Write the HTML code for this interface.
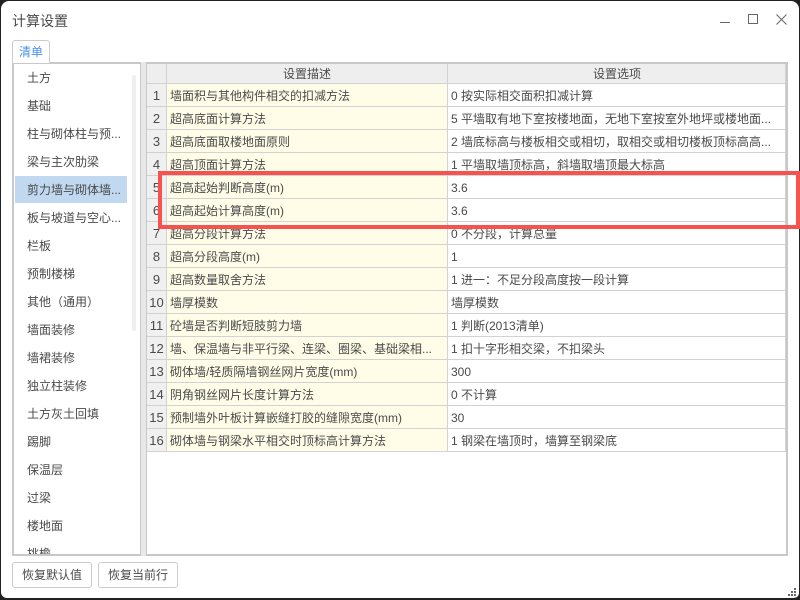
<!DOCTYPE html>
<html lang="zh"><head><meta charset="utf-8">
<style>
html,body{margin:0;padding:0;width:800px;height:600px;overflow:hidden;background:#222}
*{box-sizing:border-box}
body{font-family:"Liberation Sans","Noto Sans CJK SC",sans-serif;font-size:12px;color:#4a4a4a}
.a{position:absolute}
.t{position:absolute;white-space:nowrap;line-height:16px}
.n{position:absolute;left:147px;width:19px;text-align:center;white-space:nowrap;line-height:16px;font-size:13px}
.li{position:absolute;left:27px;white-space:nowrap;line-height:16px}
.h{position:absolute;left:147px;width:639px;background:#d2d2d2;height:1px}
.v{position:absolute;background:#d2d2d2;width:1px}
.btn{position:absolute;top:562px;height:26px;width:80px;border:1px solid #ccc;border-radius:3px;background:#fff;text-align:center;line-height:24px}
</style></head><body>
<div class="a" style="left:0;top:0;width:800px;height:600px;background:#222"></div>
<div class="a" style="left:1px;top:1px;width:798px;height:597px;background:#fff;border-radius:8px 8px 5px 6px"></div>

<div class="t" style="left:12px;top:11px;font-size:14px;line-height:20px">计算设置</div>
<svg class="a" style="left:720px;top:10px" width="70" height="20" fill="none" stroke="#666" stroke-width="1">
<rect x="28.5" y="4.5" width="9" height="9"/>
<path d="M56.5 4.5 L66.5 14.5 M66.5 4.5 L56.5 14.5"/>
</svg>
<div class="a" style="left:720px;top:22px;width:10px;height:1px;background:#666"></div>

<!-- tab -->
<div class="a" style="left:12px;top:40px;width:38px;height:23px;border:1px solid #ccc;border-bottom:none;border-radius:3px 3px 0 0;background:#fff;z-index:2"></div>
<div class="t" style="left:19px;top:44px;color:#4a90e8;z-index:3">清单</div>

<!-- left list -->
<div class="a" style="left:12px;top:62px;width:129px;height:494px;border:2px solid #c8c8c8;border-right-width:1px;background:#fff;overflow:hidden"></div>
<div class="a" style="left:141px;top:62px;width:5px;height:494px;background:#e8e8e8"></div>
<div class="a" style="left:132px;top:75px;width:4px;height:256px;background:#efefef;border-radius:2px"></div>
<div class="a" style="left:15px;top:176px;width:112px;height:27px;background:#c0d8f0"></div>
<div class="li" style="top:70px">土方</div>
<div class="li" style="top:98px">基础</div>
<div class="li" style="top:126px">柱与砌体柱与预...</div>
<div class="li" style="top:154px">梁与主次肋梁</div>
<div class="li" style="top:182px">剪力墙与砌体墙...</div>
<div class="li" style="top:210px">板与坡道与空心...</div>
<div class="li" style="top:238px">栏板</div>
<div class="li" style="top:266px">预制楼梯</div>
<div class="li" style="top:294px">其他（通用）</div>
<div class="li" style="top:322px">墙面装修</div>
<div class="li" style="top:350px">墙裙装修</div>
<div class="li" style="top:378px">独立柱装修</div>
<div class="li" style="top:406px">土方灰土回填</div>
<div class="li" style="top:434px">踢脚</div>
<div class="li" style="top:462px">保温层</div>
<div class="li" style="top:490px">过梁</div>
<div class="li" style="top:518px">楼地面</div>
<div class="a" style="left:14px;top:546px;width:126px;height:8px;overflow:hidden"><div class="t" style="left:13px;top:0">挑檐</div></div>

<!-- table -->
<div class="a" style="left:146px;top:62px;width:642px;height:494px;border:2px solid #c8c8c8;border-left-width:1px;background:#fff"></div>
<div class="a" style="left:147px;top:64px;width:639px;height:19px;background:#eee"></div>
<div class="a" style="left:147px;top:84px;width:19px;height:367px;background:#f0f0f0"></div>
<div class="a" style="left:167px;top:84px;width:280px;height:367px;background:#fffde8"></div>
<div class="v" style="left:166px;top:64px;height:387px"></div>
<div class="v" style="left:447px;top:64px;height:387px"></div>
<div class="v" style="left:785px;top:64px;height:387px"></div>
<div class="h" style="top:83px"></div>
<div class="h" style="top:106px"></div>
<div class="h" style="top:129px"></div>
<div class="h" style="top:152px"></div>
<div class="h" style="top:175px"></div>
<div class="h" style="top:198px"></div>
<div class="h" style="top:221px"></div>
<div class="h" style="top:244px"></div>
<div class="h" style="top:267px"></div>
<div class="h" style="top:290px"></div>
<div class="h" style="top:313px"></div>
<div class="h" style="top:336px"></div>
<div class="h" style="top:359px"></div>
<div class="h" style="top:382px"></div>
<div class="h" style="top:405px"></div>
<div class="h" style="top:428px"></div>
<div class="h" style="top:451px"></div>

<div class="t" style="left:283px;top:66px">设置描述</div>
<div class="t" style="left:593px;top:66px">设置选项</div>

<div class="n" style="top:88px">1</div>
<div class="t" style="left:170px;top:88px">墙面积与其他构件相交的扣减方法</div>
<div class="t" style="left:451px;top:88px">0 按实际相交面积扣减计算</div>
<div class="n" style="top:111px">2</div>
<div class="t" style="left:170px;top:111px">超高底面计算方法</div>
<div class="t" style="left:451px;top:111px">5 平墙取有地下室按楼地面，无地下室按室外地坪或楼地面...</div>
<div class="n" style="top:134px">3</div>
<div class="t" style="left:170px;top:134px">超高底面取楼地面原则</div>
<div class="t" style="left:451px;top:134px">2 墙底标高与楼板相交或相切，取相交或相切楼板顶标高高...</div>
<div class="n" style="top:157px">4</div>
<div class="t" style="left:170px;top:157px">超高顶面计算方法</div>
<div class="t" style="left:451px;top:157px">1 平墙取墙顶标高，斜墙取墙顶最大标高</div>
<div class="n" style="top:180px">5</div>
<div class="t" style="left:170px;top:180px">超高起始判断高度(m)</div>
<div class="t" style="left:451px;top:180px">3.6</div>
<div class="n" style="top:203px">6</div>
<div class="t" style="left:170px;top:203px">超高起始计算高度(m)</div>
<div class="t" style="left:451px;top:203px">3.6</div>
<div class="n" style="top:226px">7</div>
<div class="t" style="left:170px;top:226px">超高分段计算方法</div>
<div class="t" style="left:451px;top:226px">0 不分段，计算总量</div>
<div class="n" style="top:249px">8</div>
<div class="t" style="left:170px;top:249px">超高分段高度(m)</div>
<div class="t" style="left:451px;top:249px">1</div>
<div class="n" style="top:272px">9</div>
<div class="t" style="left:170px;top:272px">超高数量取舍方法</div>
<div class="t" style="left:451px;top:272px">1 进一：不足分段高度按一段计算</div>
<div class="n" style="top:295px">10</div>
<div class="t" style="left:170px;top:295px">墙厚模数</div>
<div class="t" style="left:451px;top:295px">墙厚模数</div>
<div class="n" style="top:318px">11</div>
<div class="t" style="left:170px;top:318px">砼墙是否判断短肢剪力墙</div>
<div class="t" style="left:451px;top:318px">1 判断(2013清单)</div>
<div class="n" style="top:341px">12</div>
<div class="t" style="left:170px;top:341px">墙、保温墙与非平行梁、连梁、圈梁、基础梁相...</div>
<div class="t" style="left:451px;top:341px">1 扣十字形相交梁，不扣梁头</div>
<div class="n" style="top:364px">13</div>
<div class="t" style="left:170px;top:364px">砌体墙/轻质隔墙钢丝网片宽度(mm)</div>
<div class="t" style="left:451px;top:364px">300</div>
<div class="n" style="top:387px">14</div>
<div class="t" style="left:170px;top:387px">阴角钢丝网片长度计算方法</div>
<div class="t" style="left:451px;top:387px">0 不计算</div>
<div class="n" style="top:410px">15</div>
<div class="t" style="left:170px;top:410px">预制墙外叶板计算嵌缝打胶的缝隙宽度(mm)</div>
<div class="t" style="left:451px;top:410px">30</div>
<div class="n" style="top:433px">16</div>
<div class="t" style="left:170px;top:433px">砌体墙与钢梁水平相交时顶标高计算方法</div>
<div class="t" style="left:451px;top:433px">1 钢梁在墙顶时，墙算至钢梁底</div>

<!-- red highlight -->
<div class="a" style="left:158px;top:171px;width:642px;height:58px;border:4px solid #f55250"></div>

<!-- buttons -->
<div class="btn" style="left:12px">恢复默认值</div>
<div class="btn" style="left:98px">恢复当前行</div>

<!-- resize grip -->
<svg class="a" style="left:786px;top:586px" width="14" height="14" fill="#666">
<rect x="8" y="2" width="2" height="2"/><rect x="5" y="5" width="2" height="2"/><rect x="8" y="5" width="2" height="2"/>
<rect x="2" y="8" width="2" height="2"/><rect x="5" y="8" width="2" height="2"/><rect x="8" y="8" width="2" height="2"/>
</svg>
</body></html>
